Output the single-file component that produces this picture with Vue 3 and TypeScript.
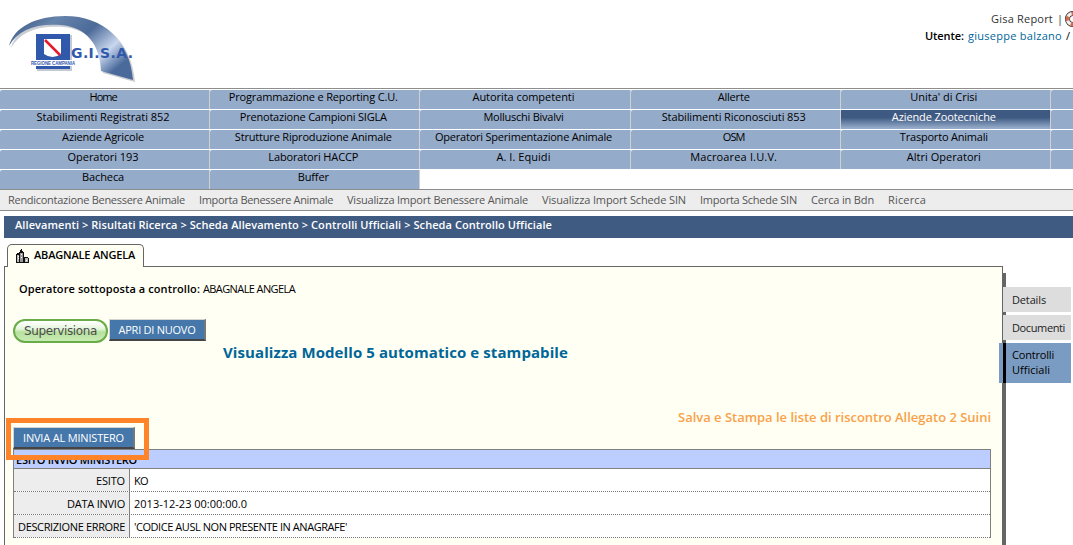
<script setup lang="ts">
import type { Directive } from 'vue'

// Spreads the letters of a label so that it fills the given width in pixels.
const vFit: Directive<HTMLElement, number> = {
  mounted(el, binding) {
    const natural = el.getBoundingClientRect().width
    const count = (el.textContent ?? '').trim().length
    if (count > 1) el.style.letterSpacing = `${(binding.value - natural) / count}px`
  },
}

interface Label {
  text: string
  width: number
}

const l = (text: string, width: number): Label => ({ text, width })

const rows: Label[][] = [
  [l('Home', 27), l('Programmazione e Reporting C.U.', 169), l('Autorita competenti', 102), l('Allerte', 32), l("Unita' di Crisi", 67), l('', 0)],
  [l('Stabilimenti Registrati 852', 133), l('Prenotazione Campioni SIGLA', 147), l('Molluschi Bivalvi', 80), l('Stabilimenti Riconosciuti 853', 144), l('Aziende Zootecniche', 104), l('', 0)],
  [l('Aziende Agricole', 82), l('Strutture Riproduzione Animale', 157), l('Operatori Sperimentazione Animale', 177), l('OSM', 22), l('Trasporto Animali', 88), l('', 0)],
  [l('Operatori 193', 71), l('Laboratori HACCP', 90), l('A. I. Equidi', 54), l('Macroarea I.U.V.', 87), l('Altri Operatori', 74), l('', 0)],
  [l('Bacheca', 42), l('Buffer', 31)],
]

const active = 'Aziende Zootecniche'

const subItems: Label[] = [
  l('Rendicontazione Benessere Animale', 177),
  l('Importa Benessere Animale', 134),
  l('Visualizza Import Benessere Animale', 181),
  l('Visualizza Import Schede SIN', 144),
  l('Importa Schede SIN', 97),
  l('Cerca in Bdn', 63),
  l('Ricerca', 38),
]

const esito = [
  { name: l('ESITO', 29), value: l('KO', 14) },
  { name: l('DATA INVIO', 58), value: l('2013-12-23 00:00:00.0', 113) },
  { name: l('DESCRIZIONE ERRORE', 107), value: l("'CODICE AUSL NON PRESENTE IN ANAGRAFE'", 213) },
]
</script>

<template>
  <div class="page">
    <header class="top">
      <svg class="logo" viewBox="0 0 145 88" width="145" height="88">
        <defs>
          <linearGradient id="swoosh" x1="0" y1="0" x2="1" y2="0.6">
            <stop offset="0" stop-color="#35517f" />
            <stop offset="0.3" stop-color="#6683ab" />
            <stop offset="0.58" stop-color="#4b6a98" />
            <stop offset="0.82" stop-color="#c9d7ee" />
            <stop offset="1" stop-color="#4a6a9c" />
          </linearGradient>
        </defs>
        <path d="M11 48C16 29 38 18 67 18C105 18 132 42 135 82L103 73C102 46 88 29 63 27C38 25 20 32 11 48Z" fill="#c9ccd2" />
        <path d="M9 46C14 27 36 16 65 16C103 16 130 40 133 80L101 71C100 44 86 27 61 25C36 23 18 30 9 46Z" fill="url(#swoosh)" />
        <rect x="37" y="35" width="35" height="36" fill="#c4c9d4" />
        <rect x="36" y="34" width="34" height="35" fill="#3159ab" />
        <path d="M44 39H61V54Q57 57 52.500 57Q48 57 44 54Z" fill="#fff" />
        <path d="M45 40L60 55" stroke="#e31b2c" stroke-width="2.500" />
        <rect x="30" y="60" width="46" height="6" fill="#fff" />
        <text x="31" y="65" class="logo-region" textLength="44" lengthAdjust="spacingAndGlyphs">REGIONE CAMPANIA</text>
        <text x="71" y="58" class="logo-name" textLength="62">G.I.S.A.</text>
      </svg>
      <div class="user">
        <div class="user-line first">
          <span v-fit="62">Gisa Report</span><span class="bar">|</span>
          <svg class="help" viewBox="0 0 16 16" width="16" height="16">
            <circle cx="8" cy="8" r="5.500" fill="none" stroke="#222" stroke-width="5" />
            <circle cx="8" cy="8" r="5.500" fill="none" stroke="#f5eee9" stroke-width="3.500" />
            <circle cx="8" cy="8" r="5.500" fill="none" stroke="#d46b50" stroke-width="3.500" stroke-dasharray="4.320" stroke-dashoffset="2.160" />
          </svg>
        </div>
        <div class="user-line">
          <b v-fit="39">Utente:</b><span v-fit="94" class="link">giuseppe balzano</span><span>/</span>
        </div>
      </div>
    </header>

    <nav class="menu">
      <div v-for="(row, i) in rows" :key="i" class="menu-row">
        <div v-for="(cell, j) in row" :key="j" class="cell" :class="{ on: cell.text === active }">
          <span v-fit="cell.width">{{ cell.text }}</span>
        </div>
      </div>
    </nav>

    <div class="submenu">
      <span v-for="s in subItems" :key="s.text" v-fit="s.width">{{ s.text }}</span>
    </div>

    <div class="crumbs">
      <span v-fit="537">Allevamenti &gt; Risultati Ricerca &gt; Scheda Allevamento &gt; Controlli Ufficiali &gt; Scheda Controllo Ufficiale</span>
    </div>

    <div class="body">
      <main class="main">
        <div class="tab">
          <svg class="building" viewBox="0 0 16 16" width="16" height="16" shape-rendering="crispEdges">
            <path d="M1 15V6H2V5H4V4H5V2H6V1H7V3H8V4H9V9H13V10H14V15Z" fill="#111" />
            <path d="M2 7H4V14H2ZM10 10H13V14H10Z" fill="#bbb" />
            <path d="M5 5H8V14H5Z" fill="#999" />
            <path d="M3 8h1v1h-1zM3 10h1v1h-1zM6 6h1v1h-1zM6 9h1v1h-1zM11 12h1v1h-1z" fill="#fff" />
          </svg>
          <b v-fit="101">ABAGNALE ANGELA</b>
        </div>
        <section class="panel">
          <p class="operator">
            <b v-fit="181">Operatore sottoposta a controllo:</b><span v-fit="92">ABAGNALE ANGELA</span>
          </p>
          <div class="actions">
            <button class="pill"><span v-fit="73">Supervisiona</span></button>
            <button class="btn reopen"><span v-fit="77">APRI DI NUOVO</span></button>
          </div>
          <h2 class="model"><span v-fit="345">Visualizza Modello 5 automatico e stampabile</span></h2>
          <div class="save"><b v-fit="313">Salva e Stampa le liste di riscontro Allegato 2 Suini</b></div>
          <div class="send">
            <button class="btn"><span v-fit="101">INVIA AL MINISTERO</span></button>
            <div class="highlight"></div>
          </div>
          <div class="table">
            <div class="table-head"><b v-fit="121">ESITO INVIO MINISTERO</b></div>
            <div v-for="r in esito" :key="r.name.text" class="table-row">
              <div class="name"><span v-fit="r.name.width">{{ r.name.text }}</span></div>
              <div class="value"><span v-fit="r.value.width">{{ r.value.text }}</span></div>
            </div>
          </div>
        </section>
      </main>
      <aside class="side">
        <div class="side-item"><span v-fit="34">Details</span></div>
        <div class="side-item"><span v-fit="53">Documenti</span></div>
        <div class="side-item current"><span v-fit="42">Controlli</span><span v-fit="38">Ufficiali</span></div>
      </aside>
    </div>
  </div>
</template>

<style>
body {
  margin: 0;
  background: #fff;
  overflow: hidden;
}
</style>

<style scoped>
.page {
  width: 1073px;
  height: 545px;
  overflow: hidden;
  font: 11px/15px "Trebuchet MS", "Open Sans", "Noto Sans", sans-serif;
  color: #000;
  white-space: nowrap;
}
.page * {
  box-sizing: border-box;
}
.top {
  display: flex;
  justify-content: space-between;
  height: 89px;
  border-bottom: 1px solid #8d8d8d;
}
.logo-name {
  font: bold 14px "DejaVu Sans", sans-serif;
  fill: #3159ab;
}
.logo-region {
  font: bold 5px "Liberation Sans", sans-serif;
  fill: #3159ab;
}
.user {
  width: 148px;
  padding-top: 10px;
}
.user-line {
  display: flex;
  gap: 4px;
  height: 17px;
  line-height: 17px;
}
.first {
  padding-left: 66px;
  color: #333;
}
.bar {
  width: 4px;
  text-align: center;
}
.help {
  flex: none;
  margin-top: 1px;
}
.link {
  color: #006699;
}
.menu {
  height: 100px;
  padding-top: 1px;
}
.menu-row {
  display: flex;
  height: 20px;
}
.cell {
  flex: none;
  width: 210.200px;
  height: 19px;
  border-right: 1px solid #d0d0d0;
  border-top-left-radius: 2px;
  background: #95abca;
  text-align: center;
  line-height: 14px;
  padding-right: 3px;
}
.on {
  color: #fff;
  border-radius: 0;
  background: linear-gradient(#3f5a82 0, #3f5a82 40%, #95abca 95%);
}
.submenu {
  display: flex;
  gap: 14px;
  height: 22px;
  padding-left: 8px;
  border-top: 1px solid #8d8d8d;
  border-bottom: 1px solid #8d8d8d;
  background: #ededed;
  color: #555;
  line-height: 19px;
}
.crumbs {
  height: 22px;
  margin: 5px 0 0 4px;
  padding-left: 11px;
  background: #3f5b82;
  color: #fff;
  font-weight: 600;
  line-height: 18px;
}
.body {
  display: flex;
  height: 307px;
}
.main {
  display: flex;
  flex-direction: column;
  width: 999px;
  margin-left: 4px;
  padding-top: 6px;
}
.tab {
  position: relative;
  z-index: 1;
  display: flex;
  gap: 3px;
  flex: none;
  width: 137px;
  height: 23px;
  margin: 0 0 -1px 3px;
  padding: 2px 0 0 7px;
  border: 1px solid #666;
  border-bottom: 0;
  border-radius: 5px 5px 0 0;
  background: #fffff3;
}
.building {
  margin-top: 1px;
}
.panel {
  flex: 1;
  padding: 14px 11px 0 8px;
  border: 1px solid #666;
  border-bottom: 0;
  background: #fffff3;
}
b {
  font-weight: 600;
}
.operator {
  display: flex;
  gap: 3px;
  height: 15px;
  margin: 0 0 23px 6px;
}
.actions {
  display: flex;
  gap: 1px;
  height: 24px;
}
.pill {
  width: 95px;
  height: 24px;
  padding: 0;
  border: 2px solid #69ac48;
  border-radius: 12px;
  background: linear-gradient(#fff 0, #e5f6dc 40%, #b7e19e 55%, #c8ebb5);
  color: #4c4c4c;
  font: 12px/21px "DejaVu Sans", sans-serif;
}
.btn {
  display: block;
  height: 22px;
  padding: 0;
  border: 1px solid;
  border-width: 1px 2px 2px 1px;
  border-color: #d4d4d0 #777 #444 #d4d4d0;
  background: #4577aa;
  color: #fff;
  font: 11px/18px "Trebuchet MS", "Open Sans", sans-serif;
}
.reopen {
  width: 97px;
}
.model {
  height: 24px;
  margin: 0 0 0 210px;
  color: #006699;
  font-size: 15px;
  font-weight: 700;
  line-height: 18px;
}
.save {
  height: 20px;
  margin-top: 41px;
  text-align: right;
  color: #f9a14a;
  font-size: 13px;
  line-height: 18px;
}
.send {
  position: relative;
  height: 21px;
}
.send .btn {
  position: relative;
  top: -1px;
  width: 122px;
}
.highlight {
  position: absolute;
  z-index: 2;
  left: -7px;
  top: -10px;
  width: 143px;
  height: 42px;
  border: 5px solid #ff8429;
}
.table {
  width: 978px;
  border: 1px solid #808080;
  border-bottom: 0;
  background: #fff;
}
.table-head {
  height: 19px;
  border-bottom: 1px solid #808080;
  padding-left: 2px;
  background: #bccdff;
  line-height: 19px;
}
.table-row {
  display: flex;
  height: 23px;
  border-bottom: 1px dotted #777;
  line-height: 23px;
}
.name {
  width: 116px;
  padding-right: 4px;
  border-right: 1px solid #808080;
  background: #ededed;
  text-align: right;
}
.value {
  padding-left: 4px;
}
.side {
  display: flex;
  flex-direction: column;
  gap: 3px;
  width: 70px;
  height: 272px;
  margin-top: 35px;
  padding-top: 14px;
  background: linear-gradient(90deg, #666 3px, transparent 3px);
}
.side-item {
  flex: none;
  width: 68px;
  height: 25px;
  padding-left: 9px;
  background: #ddd;
  color: #222;
  line-height: 25px;
}
.current {
  display: flex;
  flex-direction: column;
  align-items: flex-start;
  width: 72px;
  height: 40px;
  margin-left: -4px;
  padding: 4px 0 0 13px;
  background: linear-gradient(90deg, #7b9cc2 4px, #000 4px, #000 7px, #7b9cc2 7px);
  color: #000;
  line-height: 15px;
  z-index: 1;
}
</style>
